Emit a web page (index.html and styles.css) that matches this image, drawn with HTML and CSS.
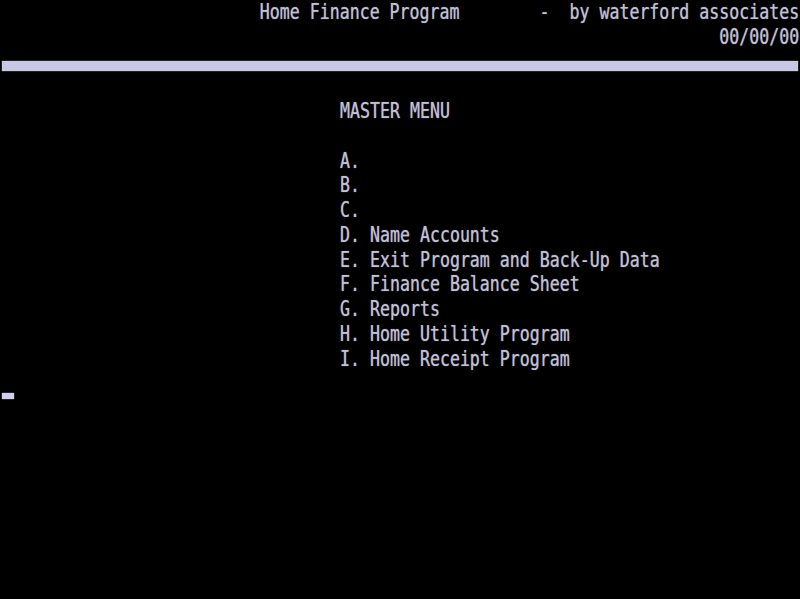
FILE: index.html
```html
<!DOCTYPE html>
<html>
<head>
<meta charset="utf-8">
<link rel="stylesheet" href="styles.css">
</head>
<body>
<div class="screen">
  <div class="row"><span class="txt">                          Home Finance Program        -  by waterford associates</span></div>
  <div class="row"><span class="txt">                                                                        00/00/00</span></div>
  <div class="row"><div class="bar"></div></div>
  <div class="row"></div>
  <div class="row menu"><span class="txt">MASTER MENU</span></div>
  <div class="row"></div>
  <div class="row menu"><span class="txt">A.</span></div>
  <div class="row menu"><span class="txt">B.</span></div>
  <div class="row menu"><span class="txt">C.</span></div>
  <div class="row menu"><span class="txt">D. Name Accounts</span></div>
  <div class="row menu"><span class="txt">E. Exit Program and Back-Up Data</span></div>
  <div class="row menu"><span class="txt">F. Finance Balance Sheet</span></div>
  <div class="row menu"><span class="txt">G. Reports</span></div>
  <div class="row menu"><span class="txt">H. Home Utility Program</span></div>
  <div class="row menu"><span class="txt">I. Home Receipt Program</span></div>
  <div class="row"><div class="cursor"></div></div>
</div>
</body>
</html>
```
FILE: styles.css
```css
html, body {
  margin: 0;
  padding: 0;
  background: #000;
}
body {
  width: 800px;
  height: 599px;
  overflow: hidden;
}
.screen {
  display: grid;
  grid-auto-rows: 24.75px;
  font-family: "DejaVu Sans Mono", monospace;
  font-size: 16.6px;
  line-height: 24.75px;
  color: #c0c0d8;
}
.row {
  white-space: pre;
  height: 24.75px;
  overflow: visible;
}
.txt {
  display: inline-block;
  transform-origin: 0 12.1px;
  transform: translateY(0.2px) scaleY(1.32);
  text-shadow: 0 0 1px rgba(192, 192, 216, 0.7);
}
.menu {
  padding-left: 340px;
}
.bar {
  height: 10.5px;
  margin: 11px 2px 0 2px;
  background: #c9c9e6;
  box-shadow: 0 0 1px #c9c9e6;
}
.cursor {
  width: 12px;
  height: 6px;
  margin: 22px 0 0 2px;
  background: #d0d0ee;
  box-shadow: 0 0 1px #d0d0ee;
}
```
